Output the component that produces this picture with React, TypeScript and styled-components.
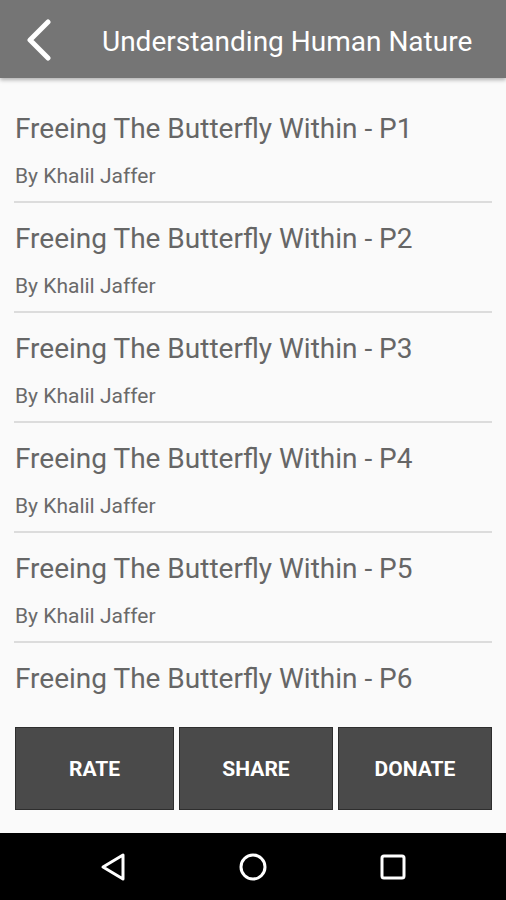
import React from 'react';
import styled, { createGlobalStyle } from 'styled-components';

const GlobalStyle = createGlobalStyle`
  html, body {
    margin: 0;
    padding: 0;
    background: #fafafa;
    font-family: Roboto, "Noto Sans", "Liberation Sans", sans-serif;
  }
`;

const Screen = styled.div`
  width: 506px;
  height: 900px;
  display: flex;
  flex-direction: column;
  background: #fafafa;
  overflow: hidden;
`;

const Toolbar = styled.header`
  height: 78px;
  flex-shrink: 0;
  display: flex;
  align-items: center;
  background: #757575;
  box-shadow: 0 2px 4px rgba(0, 0, 0, 0.3);
  position: relative;
  z-index: 1;
`;

const BackButton = styled.button`
  width: 82px;
  height: 78px;
  padding: 2px 0 0 24px;
  border: none;
  background: none;
  display: flex;
  align-items: center;
`;

const ToolbarTitle = styled.h1`
  margin: 4px 0 0 20px;
  font-size: 28px;
  font-weight: 400;
  color: #fff;
`;

const List = styled.ul`
  flex: 1;
  margin: 0;
  padding: 15px 14px 0;
  list-style: none;
  overflow: hidden;
`;

const Item = styled.li<{ $last?: boolean }>`
  padding: 20px 1px 13px;
  border-bottom: ${(p) => (p.$last ? 'none' : '2px solid #dcdcdc')};
`;

const ItemTitle = styled.div`
  font-size: 28px;
  line-height: 32px;
  color: #666;
`;

const ItemAuthor = styled.div`
  margin-top: 19px;
  font-size: 21px;
  line-height: 24px;
  color: #6a6a6a;
`;

const ButtonBar = styled.div`
  flex-shrink: 0;
  display: grid;
  grid-template-columns: 159px 154px 154px;
  gap: 5px;
  padding: 15px 14px 23px 15px;
`;

const ActionButton = styled.button`
  height: 83px;
  border: 1px solid #2e2e2e;
  background: #4a4a4a;
  color: #fff;
  font-family: Roboto, "Liberation Sans", sans-serif;
  font-size: 21px;
  font-weight: 700;
`;

const NavBar = styled.nav`
  height: 67px;
  flex-shrink: 0;
  display: grid;
  grid-template-columns: repeat(3, 140px);
  justify-content: center;
  align-items: center;
  justify-items: center;
  background: #000;
`;

const items = [1, 2, 3, 4, 5, 6];

export default function App() {
  return (
    <Screen>
      <GlobalStyle />
      <Toolbar>
        <BackButton aria-label="Back">
          <svg width="30" height="42" viewBox="0 0 30 42">
            <polyline
              points="24,3 6,21 24,39"
              fill="none"
              stroke="#fff"
              strokeWidth="5"
              strokeLinecap="round"
              strokeLinejoin="round"
            />
          </svg>
        </BackButton>
        <ToolbarTitle>Understanding Human Nature</ToolbarTitle>
      </Toolbar>
      <List>
        {items.map((n) => (
          <Item key={n} $last={n === 6}>
            <ItemTitle>Freeing The Butterfly Within - P{n}</ItemTitle>
            {n < 6 && <ItemAuthor>By Khalil Jaffer</ItemAuthor>}
          </Item>
        ))}
      </List>
      <ButtonBar>
        <ActionButton>RATE</ActionButton>
        <ActionButton>SHARE</ActionButton>
        <ActionButton>DONATE</ActionButton>
      </ButtonBar>
      <NavBar>
        <svg width="28" height="30" viewBox="0 0 28 30">
          <polygon points="24,3 24,27 4,15" fill="none" stroke="#fff" strokeWidth="3" strokeLinejoin="round" />
        </svg>
        <svg width="30" height="30" viewBox="0 0 30 30">
          <circle cx="15" cy="15" r="12" fill="none" stroke="#fff" strokeWidth="3" />
        </svg>
        <svg width="26" height="26" viewBox="0 0 26 26">
          <rect x="2" y="2" width="22" height="22" rx="2" fill="none" stroke="#fff" strokeWidth="3" />
        </svg>
      </NavBar>
    </Screen>
  );
}
